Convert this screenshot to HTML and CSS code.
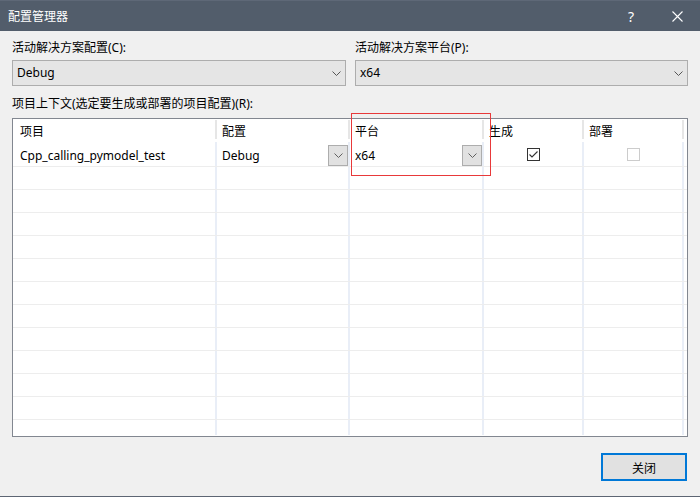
FILE: index.html
```html
<!DOCTYPE html>
<html lang="zh-CN">
<head>
<meta charset="utf-8">
<title>配置管理器</title>
<link rel="stylesheet" href="styles.css">
</head>
<body>
<div class="window">
  <div class="titlebar">
    <span class="title">配置管理器</span>
    <div class="controls">
      <span class="ctrl help">?</span>
      <span class="ctrl close">
        <svg width="11" height="11" viewBox="0 0 11 11"><path d="M0.5 0.5 L10.5 10.5 M10.5 0.5 L0.5 10.5" stroke="#ffffff" stroke-width="1.1" fill="none"/></svg>
      </span>
    </div>
  </div>

  <div class="content">
    <div class="top-fields">
      <div class="field">
        <div class="label">活动解决方案配置(C):</div>
        <div class="combo">
          <span class="combo-text">Debug</span>
          <svg class="chev" width="9" height="5" viewBox="0 0 9 5"><polyline points="0.5,0.5 4.5,4.5 8.5,0.5" fill="none" stroke="#555" stroke-width="1"/></svg>
        </div>
      </div>
      <div class="field field-right">
        <div class="label">活动解决方案平台(P):</div>
        <div class="combo">
          <span class="combo-text">x64</span>
          <svg class="chev" width="9" height="5" viewBox="0 0 9 5"><polyline points="0.5,0.5 4.5,4.5 8.5,0.5" fill="none" stroke="#555" stroke-width="1"/></svg>
        </div>
      </div>
    </div>

    <div class="label label-ctx">项目上下文(选定要生成或部署的项目配置)(R):</div>

    <div class="table">
      <div class="row head">
        <div class="cell c1">项目</div>
        <div class="cell">配置</div>
        <div class="cell">平台</div>
        <div class="cell">生成</div>
        <div class="cell">部署</div>
        <div class="cell filler"></div>
      </div>
      <div class="row first">
        <div class="cell c1 txt">Cpp_calling_pymodel_test</div>
        <div class="cell has-btn"><span class="cell-text">Debug</span>
          <span class="dd"><svg width="9" height="5" viewBox="0 0 9 5"><polyline points="0.5,0.5 4.5,4.5 8.5,0.5" fill="none" stroke="#606060" stroke-width="1"/></svg></span>
        </div>
        <div class="cell has-btn"><span class="cell-text">x64</span>
          <span class="dd"><svg width="9" height="5" viewBox="0 0 9 5"><polyline points="0.5,0.5 4.5,4.5 8.5,0.5" fill="none" stroke="#606060" stroke-width="1"/></svg></span>
        </div>
        <div class="cell center">
          <span class="check checked"><svg width="11" height="11" viewBox="0 0 11 11"><polyline points="1.5,5.5 4,8 9.5,2.5" fill="none" stroke="#333" stroke-width="1.1"/></svg></span>
        </div>
        <div class="cell center"><span class="check disabled"></span></div>
        <div class="cell filler"></div>
      </div>
      <div class="row"><div class="cell c1"></div><div class="cell"></div><div class="cell"></div><div class="cell"></div><div class="cell"></div><div class="cell filler"></div></div>
      <div class="row"><div class="cell c1"></div><div class="cell"></div><div class="cell"></div><div class="cell"></div><div class="cell"></div><div class="cell filler"></div></div>
      <div class="row"><div class="cell c1"></div><div class="cell"></div><div class="cell"></div><div class="cell"></div><div class="cell"></div><div class="cell filler"></div></div>
      <div class="row"><div class="cell c1"></div><div class="cell"></div><div class="cell"></div><div class="cell"></div><div class="cell"></div><div class="cell filler"></div></div>
      <div class="row"><div class="cell c1"></div><div class="cell"></div><div class="cell"></div><div class="cell"></div><div class="cell"></div><div class="cell filler"></div></div>
      <div class="row"><div class="cell c1"></div><div class="cell"></div><div class="cell"></div><div class="cell"></div><div class="cell"></div><div class="cell filler"></div></div>
      <div class="row"><div class="cell c1"></div><div class="cell"></div><div class="cell"></div><div class="cell"></div><div class="cell"></div><div class="cell filler"></div></div>
      <div class="row"><div class="cell c1"></div><div class="cell"></div><div class="cell"></div><div class="cell"></div><div class="cell"></div><div class="cell filler"></div></div>
      <div class="row"><div class="cell c1"></div><div class="cell"></div><div class="cell"></div><div class="cell"></div><div class="cell"></div><div class="cell filler"></div></div>
      <div class="row"><div class="cell c1"></div><div class="cell"></div><div class="cell"></div><div class="cell"></div><div class="cell"></div><div class="cell filler"></div></div>
      <div class="row"><div class="cell c1"></div><div class="cell"></div><div class="cell"></div><div class="cell"></div><div class="cell"></div><div class="cell filler"></div></div>
      <div class="row last"><div class="cell c1"></div><div class="cell"></div><div class="cell"></div><div class="cell"></div><div class="cell"></div><div class="cell filler"></div></div>
    </div>

    <div class="footer">
      <button class="btn">关闭</button>
    </div>
  </div>

  <div class="highlight"></div>
</div>
</body>
</html>
```

FILE: styles.css
```css
* { box-sizing: border-box; }

html, body {
  margin: 0;
  padding: 0;
  background: #f0f0f0;
}

body {
  font-family: "Noto Sans", "Noto Sans CJK SC", sans-serif;
  font-size: 12px;
  color: #000;
}

.window {
  position: relative;
  width: 700px;
  height: 497px;
  background: #f0f0f0;
  border-bottom: 1px solid #5d6573;
}

.titlebar {
  height: 31px;
  background: #525d6b;
  border-top: 1px solid #5e6877;
  display: flex;
  align-items: center;
  padding-left: 8px;
  color: #ffffff;
}

.title {
  font-family: "Noto Sans CJK SC", sans-serif;
  font-size: 12px;
  line-height: 16px;
}

.controls {
  margin-left: auto;
  display: flex;
  height: 100%;
}

.ctrl {
  width: 46px;
  height: 100%;
  display: flex;
  align-items: center;
  justify-content: center;
}

.help {
  font-family: "Noto Sans", sans-serif;
  font-size: 14px;
  color: #fff;
}

.content {
  padding: 9px 12px 0 12px;
}

.top-fields {
  display: flex;
  gap: 9px;
}

.field {
  width: 334px;
}

.field-right {
  width: 333px;
}

.label {
  line-height: 16px;
  height: 16px;
  white-space: nowrap;
}

.combo {
  margin-top: 4px;
  height: 26px;
  border: 1px solid #adadad;
  background: #e5e5e5;
  display: flex;
  align-items: center;
  padding: 0 4px 0 4px;
}

.combo-text {
  flex: 1;
  line-height: 16px;
}

.label-ctx {
  margin-top: 10px;
}

.table {
  margin-top: 6px;
  height: 319px;
  border: 1px solid #828790;
  background: #ffffff;
  display: flex;
  flex-direction: column;
  overflow: hidden;
}

.row {
  display: grid;
  grid-template-columns: 204px 133px 134px 100px 100px 1fr;
  height: 23px;
  border-bottom: 1px solid #ededed;
}

.row.head {
  height: 23px;
  border-bottom: none;
}

.row.first {
  height: 25px;
}

.row.last {
  flex: 1;
  border-bottom: none;
  padding-bottom: 1px;
}

.cell {
  border-right: 2px solid #e9eef7;
  padding-left: 5px;
  display: flex;
  align-items: center;
  line-height: 16px;
  white-space: nowrap;
}

.cell.c1 {
  padding-left: 7px;
}

.cell.filler {
  border-right: none;
}

.head .cell {
  border-right: none;
  position: relative;
  padding-top: 2px;
}

.head .cell::after {
  content: "";
  position: absolute;
  right: 0;
  top: 1px;
  bottom: 3px;
  width: 2px;
  background: #e6e6e6;
}

.head .cell.filler::after {
  display: none;
}

.cell.txt {
  padding-top: 3px;
}

.cell.has-btn {
  justify-content: space-between;
}

.cell-text {
  margin-top: 3px;
}

.dd {
  width: 20px;
  height: 21px;
  align-self: flex-end;
  border: 1px solid #adadad;
  background: #e1e1e1;
  display: flex;
  align-items: center;
  justify-content: center;
}

.cell.center {
  justify-content: center;
  padding-left: 0;
  padding-top: 1px;
}

.check {
  width: 13px;
  height: 13px;
  background: #fff;
  display: flex;
  align-items: center;
  justify-content: center;
}

.check.checked {
  border: 1px solid #333333;
}

.check.disabled {
  border: 1px solid #cccccc;
}

.footer {
  display: flex;
  justify-content: flex-end;
  margin-top: 16px;
  padding-right: 1px;
}

.btn {
  width: 86px;
  height: 28px;
  border: 2px solid #0078d7;
  background: #e1e1e1;
  font-family: "Noto Sans CJK SC", sans-serif;
  font-size: 12px;
  color: #000;
  padding: 0;
  margin: 0;
}

.highlight {
  position: absolute;
  left: 351px;
  top: 113px;
  width: 140px;
  height: 63px;
  border: 1px solid #e8393a;
  pointer-events: none;
}
```
